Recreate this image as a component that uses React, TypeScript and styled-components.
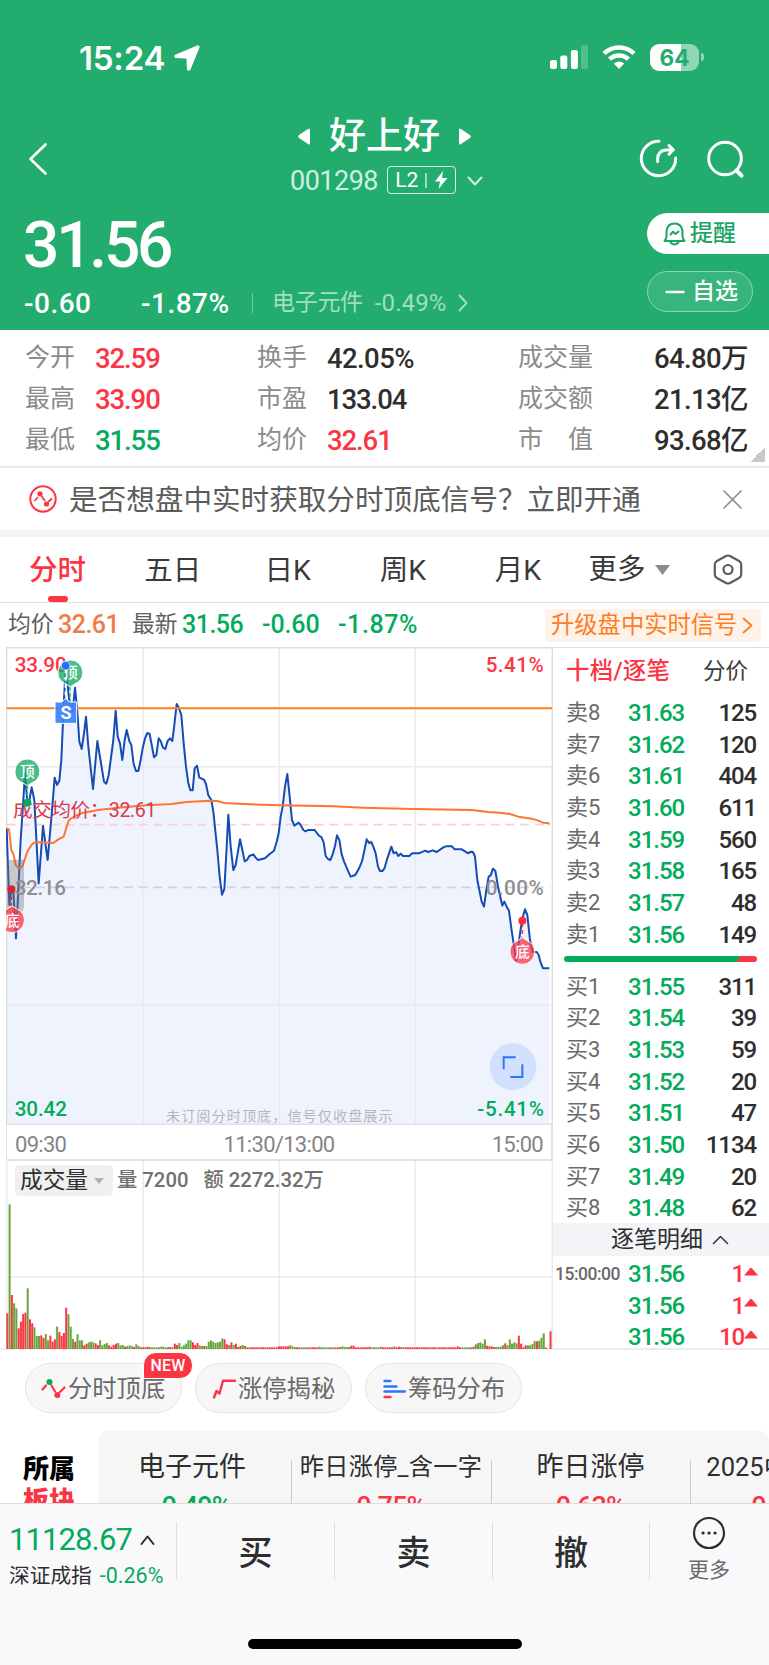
import React from 'react';
import styled, { createGlobalStyle } from 'styled-components';

const RED = '#fb3644';
const GREEN = '#04ab5c';
const HEADER = '#22ac6e';

const Global = createGlobalStyle`
  * { box-sizing: border-box; }
  body {
    margin: 0;
    background: #fff;
    font-family: Roboto, "Noto Sans CJK SC", sans-serif;
    color: #2e2e2e;
    overflow: hidden;
  }
  svg { display: block; flex: none; }
`;

const Page = styled.div`
  width: 769px;
  height: 1665px;
  display: flex;
  flex-direction: column;
  overflow: hidden;
  white-space: nowrap;
`;

const Content = styled.main`
  height: 1503px;
  flex: none;
  overflow: hidden;
`;

/* ---------- header ---------- */
const Header = styled.header`
  height: 330px;
  background: ${HEADER};
  color: #fff;
`;

const StatusBar = styled.div`
  height: 115px;
  padding: 0 65px 0 79px;
  display: flex;
  align-items: center;
`;

const Clock = styled.span`
  font: 600 33px/40px Inter, sans-serif;
  letter-spacing: -0.2px;
  margin-right: 9px;
  padding-top: 1px;
`;

const StatusIcons = styled.div`
  margin-left: auto;
  display: flex;
  align-items: center;
  gap: 14px;
  padding-bottom: 1px;
`;

const Battery = styled.div`
  display: flex;
  align-items: center;
  gap: 2px;
`;

const BatteryBody = styled.div`
  width: 49px;
  height: 27px;
  border-radius: 9px;
  background: linear-gradient(to right, #fff 64%, #91d6b7 64%);
  color: ${HEADER};
  font: 700 22.5px/27px Inter, sans-serif;
  text-align: center;
`;

const BatteryTip = styled.i`
  width: 3px;
  height: 8px;
  border-radius: 0 4px 4px 0;
  background: #91d6b7;
`;

const Nav = styled.nav`
  height: 90px;
  display: grid;
  grid-template-columns: 200px 1fr 200px;
`;

const NavBack = styled.div`
  padding: 28px 0 0 28px;
`;

const NavActions = styled.div`
  display: flex;
  justify-content: flex-end;
  gap: 29px;
  padding: 24px 25px 0 0;
`;

const NavTitle = styled.div`
  display: flex;
  flex-direction: column;
  align-items: center;
`;

const StockName = styled.h1`
  margin: 1px 0 0;
  height: 40px;
  display: flex;
  align-items: center;
  gap: 19px;
  font-size: 37px;
  line-height: 41px;
  font-weight: 500;
`;

const StockCode = styled.div`
  height: 34px;
  margin-top: 8px;
  padding-left: 4px;
  display: flex;
  align-items: center;
  font-size: 27px;
  line-height: 34px;
  letter-spacing: -0.5px;
  color: #d0efe1;
`;

const LevelBadge = styled.span`
  width: 69px;
  height: 28px;
  margin: 0 11px 2px 9px;
  border: 1.5px solid #d9f2e7;
  border-radius: 4px;
  display: flex;
  align-items: center;
  justify-content: center;
  gap: 7px;
  font-size: 21px;
  letter-spacing: 0;
  color: #fff;
`;

const BadgeRule = styled.i`
  width: 1.5px;
  height: 15px;
  background: #9edcc0;
`;

const Quote = styled.div`
  height: 125px;
  display: flex;
  justify-content: space-between;
`;

const QuoteFigures = styled.div`
  padding-left: 23px;
`;

const Price = styled.div`
  margin-top: 3px;
  height: 74px;
  font-size: 64px;
  line-height: 75px;
  font-weight: 500;
  letter-spacing: -3.2px;
`;

const ChangeRow = styled.div`
  height: 42px;
  padding-left: 1px;
  display: flex;
  align-items: center;
  font-size: 28px;
  font-weight: 500;
  letter-spacing: 0.5px;
`;

const Change = styled.span<{ $w: number }>`
  width: ${p => p.$w}px;
`;

const Sector = styled.span`
  margin-left: 12px;
  padding-left: 19px;
  line-height: 20px;
  border-left: 1.5px solid #6dc9a0;
  display: flex;
  align-items: center;
  gap: 12px;
  font-size: 23px;
  font-weight: 400;
  letter-spacing: -0.3px;
  color: #a3debf;
`;

const SectorChange = styled.span`
  font-size: 24px;
  letter-spacing: 0.1px;
`;

const QuoteButtons = styled.div`
  width: 122px;
  padding-top: 8px;
  display: flex;
  flex-direction: column;
  gap: 17px;
`;

const AlertButton = styled.button`
  height: 41px;
  border: 0;
  border-radius: 21px 0 0 21px;
  background: #fff;
  color: #1da567;
  font: 500 23px/41px Roboto, "Noto Sans CJK SC", sans-serif;
  display: flex;
  align-items: center;
  gap: 4px;
  padding: 0 0 0 16px;
`;

const WatchButton = styled.button`
  width: 106px;
  height: 41px;
  border: 1px solid #90d5b6;
  border-radius: 21px;
  background: #38b57d;
  color: #fff;
  font: 500 23px/40px Roboto, "Noto Sans CJK SC", sans-serif;
  display: flex;
  align-items: center;
  gap: 7px;
  padding: 1px 0 0 17px;
`;

/* ---------- stats ---------- */
const Stats = styled.section`
  height: 138px;
  padding: 8px 21px 0 25px;
  display: grid;
  grid-template-columns: 232px 261px 1fr;
  grid-auto-rows: 41px;
  border-bottom: 2px solid #ebebed;
  background: linear-gradient(135deg, transparent 50%, #c8c8c8 50%) no-repeat 750px 117px / 15px 15px;
`;

const Stat = styled.div<{ $spread?: boolean }>`
  display: flex;
  align-items: center;
  justify-content: ${p => (p.$spread ? 'space-between' : 'flex-start')};
  font-size: 25px;
  line-height: 41px;
`;

const StatLabel = styled.span`
  min-width: 70px;
  color: #8b8b8b;
  padding-bottom: 2px;
  line-height: 39px;
`;

const StatValue = styled.span<{ $c?: string; $wide?: boolean }>`
  font-size: 27.5px;
  font-weight: 500;
  letter-spacing: ${p => (p.$wide ? '-0.6px' : '-1.1px')};
  color: ${p => p.$c || '#2e2e2e'};
`;

/* ---------- notice ---------- */
const Notice = styled.section`
  height: 69px;
  border-bottom: 7px solid #f2f4f8;
  padding: 0 27px 0 29px;
  display: flex;
  align-items: center;
`;

const NoticeText = styled.span`
  margin-left: 12px;
  padding-top: 2px;
  font-size: 28.6px;
  line-height: 60px;
  color: #5c5c5c;
`;

const CloseSlot = styled.span`
  margin-left: auto;
`;

/* ---------- tabs ---------- */
const Tabs = styled.div`
  height: 66px;
  display: flex;
  border-bottom: 1.5px solid #dedede;
  font-size: 28.5px;
  line-height: 68px;
  color: #3a3a3a;
`;

const Tab = styled.div<{ $on?: boolean }>`
  flex: 0 0 115.1px;
  display: flex;
  flex-direction: column;
  align-items: center;
  height: 65px;
  font-weight: ${p => (p.$on ? 500 : 400)};
  color: ${p => (p.$on ? RED : '#3a3a3a')};
  &::after {
    content: '';
    flex: none;
    width: 20px;
    height: 6px;
    margin-top: -9px;
    border-radius: 3px;
    background: ${p => (p.$on ? RED : 'transparent')};
  }
`;

const MoreTab = styled.div`
  margin-left: 13px;
  display: flex;
  align-items: center;
  gap: 10px;
`;

const GearSlot = styled.div`
  margin: 17px 0 0 43px;
`;

/* ---------- summary row ---------- */
const Summary = styled.div`
  height: 44px;
  padding: 0 8px 0 8px;
  display: flex;
  align-items: center;
  line-height: 46px;
`;

const SummaryLabel = styled.span`
  width: 50px;
  font-size: 22.8px;
  color: #606060;
`;

const SummaryValue = styled.span<{ $w: number; $c: string; $gap?: number }>`
  width: ${p => p.$w}px;
  font-size: 25px;
  font-weight: 500;
  letter-spacing: ${p => p.$gap ?? -0.5}px;
  color: ${p => p.$c};
`;

const Upgrade = styled.span`
  margin-left: auto;
  width: 216px;
  height: 33px;
  border-radius: 4px;
  background: #fff2e9;
  color: #ff7c24;
  font-size: 23.3px;
  line-height: 35px;
  display: flex;
  align-items: center;
  gap: 5px;
  padding-left: 6px;
`;

/* ---------- market area ---------- */
const Market = styled.section`
  height: 703px;
  display: grid;
  grid-template-columns: 547px 1fr;
  padding-left: 6px;
  border-bottom: 2px solid #ececee;
`;

const ChartColumn = styled.div`
  display: flex;
  flex-direction: column;
`;

const TimeAxis = styled.div`
  height: 36px;
  display: flex;
  justify-content: space-between;
  padding: 0 8px;
  border: solid #e2e2e4;
  border-width: 0 2px 2px 1.5px;
  font-size: 22px;
  line-height: 39px;
  letter-spacing: -0.7px;
  color: #858585;
`;

const VolumePane = styled.div`
  height: 188px;
  display: grid;
  & > * { grid-area: 1 / 1; }
`;

const VolumeHead = styled.div`
  height: 40px;
  padding: 4px 0 0 9px;
  display: flex;
  align-items: flex-start;
  z-index: 1;
  font-size: 20.3px;
  line-height: 31px;
  font-weight: 500;
  color: #707070;
`;

const VolumePicker = styled.span`
  width: 98px;
  height: 31px;
  border-radius: 4px;
  background: #f0f0f0;
  color: #2e2e2e;
  font-size: 22.7px;
  font-weight: 400;
  display: flex;
  align-items: center;
  gap: 6px;
  padding-left: 5px;
  margin-right: 4px;
`;

const VolumeFigure = styled.span`
  margin-right: 15px;
`;

const Book = styled.aside`
  border-top: 1.5px solid #dedee0;
  display: flex;
  flex-direction: column;
`;

const BookTabs = styled.div`
  height: 48px;
  padding: 0 21px 0 13px;
  display: flex;
  justify-content: space-between;
  font-size: 22.5px;
  line-height: 47px;
  color: #3c3c3c;
`;

const BookTabOn = styled.b`
  font-size: 23.4px;
  letter-spacing: 0.3px;
  font-weight: 500;
  color: ${RED};
`;

const Levels = styled.div`
  padding: 0 14px 0 13px;
`;

const Level = styled.div`
  height: 31.7px;
  display: grid;
  grid-template-columns: 62px 60px 1fr;
  line-height: 34px;
`;

const LevelName = styled.span`
  font-size: 22px;
  color: #6a6a6a;
`;

const LevelPrice = styled.span`
  font-size: 24px;
  font-weight: 500;
  letter-spacing: -1px;
  color: ${GREEN};
`;

const LevelSize = styled.span`
  font-size: 24px;
  font-weight: 500;
  letter-spacing: -1.1px;
  margin-right: -1px;
  text-align: right;
`;

const Balance = styled.div`
  height: 6px;
  margin: 6px 12px 8px 11px;
  border-radius: 3px;
  background: linear-gradient(125deg, ${GREEN} 89.5%, ${RED} 89.5%);
`;

const TickHead = styled.div`
  height: 33px;
  padding-left: 18px;
  background: #f2f4f8;
  display: flex;
  align-items: center;
  justify-content: center;
  gap: 9px;
  font-size: 23px;
  line-height: 34px;
`;

const Tick = styled.div`
  height: 31.7px;
  margin-right: 11px;
  display: grid;
  grid-template-columns: 75px 60px 1fr 15px;
  align-items: center;
  line-height: 36px;
`;

const TickTime = styled.span`
  padding-left: 2px;
  font-size: 17.5px;
  font-weight: 500;
  letter-spacing: -0.5px;
  color: #6a6a6a;
`;

const TickSize = styled(LevelSize)`
  color: ${RED};
`;

/* ---------- chips ---------- */
const Chips = styled.div`
  height: 81px;
  padding: 13px 0 0 25px;
  display: flex;
  gap: 13px;
`;

const Chip = styled.div`
  position: relative;
  width: 157px;
  height: 50px;
  border: 1px solid #e4e4e4;
  border-radius: 25px;
  background: #f7f7f7;
  display: flex;
  align-items: center;
  gap: 2px;
  padding-left: 15px;
  font-size: 24.3px;
  line-height: 50px;
  padding-top: 2px;
  color: #6a6a6a;
`;

const NewBadge = styled.span`
  position: absolute;
  left: 117px;
  top: -12px;
  width: 50px;
  height: 27px;
  border: 1px solid #fff;
  border-radius: 13px 13px 13px 2px;
  background: ${RED};
  color: #fff;
  font: 500 16px/26px Roboto, sans-serif;
  text-align: center;
  letter-spacing: 0.2px;
`;

/* ---------- sector strip ---------- */
const SectorStrip = styled.section`
  height: 72px;
  display: flex;
`;

const StripTitle = styled.div`
  width: 98px;
  padding: 22px 0 0 23px;
  font-size: 26px;
  line-height: 32px;
  font-weight: 800;
  color: #000;
`;

const StripTitleRed = styled.div`
  color: ${RED};
`;

const StripCards = styled.div`
  width: 671px;
  border-radius: 10px 10px 0 0;
  background: #f6f6f6;
  display: flex;
  overflow: hidden;
`;

const StripCard = styled.div<{ $w: number; $size: number; $end?: number; $gap?: number }>`
  flex: 0 0 ${p => p.$w}px;
  padding: 19px ${p => p.$end ?? 0}px 0 0;
  text-align: center;
  font-size: ${p => p.$size}px;
  letter-spacing: ${p => p.$gap ?? 0}px;
  line-height: 34px;
  background: linear-gradient(#ccc, #ccc) no-repeat right 29px / 1.5px 100%;
`;

const StripValue = styled.div<{ $c: string }>`
  padding-top: 5px;
  font-size: 27px;
  line-height: 36px;
  letter-spacing: -0.8px;
  font-weight: 500;
  color: ${p => p.$c};
`;

/* ---------- bottom bar ---------- */
const BottomBar = styled.footer`
  height: 162px;
  flex: none;
  border-top: 1.5px solid #dcdce0;
  background: #f9f9fc;
  display: flex;
  flex-direction: column;
  align-items: center;
`;

const Actions = styled.div`
  width: 769px;
  height: 135px;
  padding-top: 18px;
  display: grid;
  grid-template-columns: 177px 158px 158px 157px 1fr;
  grid-template-rows: 58px;
`;

const IndexCell = styled.div`
  padding-left: 9px;
  border-right: 1px solid #dedee2;
`;

const IndexValue = styled.div`
  height: 32px;
  margin-top: 2px;
  display: flex;
  align-items: center;
  gap: 8px;
  font-size: 31px;
  line-height: 32px;
  letter-spacing: -0.9px;
  color: ${GREEN};
`;

const IndexName = styled.div`
  margin-top: 6px;
  font-size: 20.7px;
  line-height: 28px;
`;

const IndexChange = styled.span`
  margin-left: 8px;
  font-size: 21.5px;
  color: ${GREEN};
`;

const Action = styled.div`
  border-right: 1px solid #dedee2;
  font-size: 34px;
  line-height: 62px;
  font-weight: 500;
  text-align: center;
`;

const MoreCell = styled.div`
  display: flex;
  flex-direction: column;
  align-items: center;
  margin: -6px 1px 0 0;
  font-size: 21px;
  line-height: 40px;
  color: #6a6a6a;
`;

const HomeIndicator = styled.div`
  width: 274px;
  height: 10px;
  border-radius: 5px;
  background: #000;
`;

/* ---------- data ---------- */
const stats: [string, string, string?][] = [
  ['今开', '32.59', RED], ['换手', '42.05%'], ['成交量', '64.80万'],
  ['最高', '33.90', RED], ['市盈', '133.04'], ['成交额', '21.13亿'],
  ['最低', '31.55', GREEN], ['均价', '32.61', RED], ['市　值', '93.68亿'],
];

const asks = [['卖8', '31.63', '125'], ['卖7', '31.62', '120'], ['卖6', '31.61', '404'], ['卖5', '31.60', '611'],
  ['卖4', '31.59', '560'], ['卖3', '31.58', '165'], ['卖2', '31.57', '48'], ['卖1', '31.56', '149']];
const bids = [['买1', '31.55', '311'], ['买2', '31.54', '39'], ['买3', '31.53', '59'], ['买4', '31.52', '20'],
  ['买5', '31.51', '47'], ['买6', '31.50', '1134'], ['买7', '31.49', '20'], ['买8', '31.48', '62']];
const ticks = [['15:00:00', '31.56', '1'], ['', '31.56', '1'], ['', '31.56', '10']];

const pricePath = '20,565 28,795 34,750 40,750 48,895 62,600 70,480 75,400 82,485 87,487 95,442 103,480 116,730 129,558 143,660 157,500 164,413 171,435 178,422 184,360 191,200 197,80 206,165 212,205 218,215 225,143 232,215 238,305 245,327 252,280 258,230 265,320 279,447 292,303 299,345 312,425 319,431 326,405 340,300 347,212 353,290 360,310 367,360 374,300 380,270 388,303 394,315 401,372 408,393 415,393 422,360 428,325 435,295 442,279 449,282 456,320 462,352 469,345 476,295 482,303 489,323 496,327 503,303 510,295 517,303 523,255 530,192 537,205 544,225 551,310 558,380 565,430 571,451 578,451 584,385 591,377 598,413 612,419 618,432 625,466 634,480 640,515 652,630 659,710 666,764 673,747 679,640 685,524 692,620 700,690 707,675 713,640 720,598 727,630 734,664 741,660 748,648 760,643 767,653 774,660 795,655 808,643 822,632 830,605 836,580 842,530 848,500 855,440 862,402 868,460 876,540 883,557 896,548 903,557 910,570 917,574 924,570 944,570 956,586 964,591 971,607 977,648 984,657 991,660 998,643 1005,618 1011,586 1018,600 1025,643 1032,664 1045,695 1052,710 1066,705 1078,683 1086,664 1093,632 1100,598 1107,609 1114,606 1120,620 1127,640 1134,680 1140,693 1147,693 1153,686 1162,655 1174,620 1181,640 1188,636 1195,648 1202,641 1209,648 1228,648 1236,640 1256,640 1276,632 1284,636 1298,631 1310,636 1330,622 1338,619 1356,619 1364,628 1385,628 1405,640 1412,635 1419,636 1425,650 1432,720 1445,785 1452,800 1459,750 1466,710 1472,706 1479,686 1486,693 1494,740 1507,797 1513,785 1520,800 1527,812 1534,865 1540,905 1548,963 1558,895 1566,840 1575,808 1582,825 1590,900 1598,935 1610,936 1616,945 1622,968 1629,985 1648,985';
const averagePath = '20,565 27,568 34,630 41,645 47,675 54,683 61,685 68,677 82,635 95,614 103,608 116,607 160,609 175,598 191,590 200,560 207,540 225,528 250,518 300,509 370,502 440,496 515,492 560,486 630,482 652,483 673,489 750,493 840,496 920,497 1000,499 1090,503 1240,507 1415,510 1465,516 1500,518 1530,522 1555,530 1595,536 1615,542 1629,548 1642,549 1649,552';

const openingBars = 'r108 g435 r163 g138 g123 r63 r83 r106 r110 g183 r90 r78 g66 g40 g40 r42 r34 g46 g27 r41 r23 r30 g68 r52 r40 r49 r125 g105 g68 g31 r23 g45 g27 g27 r12 r17 g21 g23 g21 r18 r13 g27 g12 g16 g19 r12 r8 r13 r17 g19 g12 g13 r8 g10 g12 g10 r7 g15 g10 r6 r6 r6 r8 g7 g6 g6 g6 g6 g8 g8 g6 r6 r7 g6 r17 r13 g19 g8 g12 g17 g27 g27 r21 r13 r19 g12 g10 r10 g10 g23 g27 g23 g19 g21 g23 g33 r30 r15 g13 r21 g13 r17 r7 r10 g13 g10'.split(' ');
const closingBars = 'g15 g19 g21 g17 g30 r11 r9 r9 r7 g7 g7 g8 g12 r18 g12 g30 g17 g21 g18 r41 r17 r6 r12 g12 g12 g16 g25 r24 g26 g35 g48 r5 r0 r54'.split(' ');
const middayBumps: Record<number, string> = { 120: 'r9', 121: 'r9', 122: 'r9', 123: 'r9', 124: 'r9', 125: 'g12', 126: 'g9', 127: 'g7', 138: 'g8', 147: 'g7', 148: 'g9', 149: 'g7', 150: 'g7', 151: 'g7', 152: 'r11', 153: 'r11', 160: 'r8', 165: 'g8', 171: 'g9', 172: 'r6', 173: 'r8', 174: 'g7', 199: 'r9', 205: 'r6', 206: 'r8' };
const volumeBars = Array.from({ length: 241 }, (_, i) => {
  if (i < openingBars.length) return openingBars[i];
  if (i >= 207) return closingBars[i - 207];
  if (middayBumps[i]) return middayBumps[i];
  const green = (i > 129 && i < 133) || (i > 138 && i < 145) || (i > 160 && i < 165) || i === 190 || (i > 200 && i < 205);
  return (green ? 'g' : 'r') + '6';
});

/* ---------- drawings ---------- */
const Pin = ({ x, y, up, label, color, r = 37 }: { x: number; y: number; up?: boolean; label: string; color: string; r?: number }) => (
  <g>
    <path
      d="M-37 0A37 37 0 0 1 37 0C37 16 30 27 16 33L0 43L-16 33C-30 27 -37 16 -37 0Z"
      transform={`translate(${x} ${y}) scale(${r / 37} ${up ? -1 : 1})`}
      fill={color} fillOpacity={0.76} stroke="#fff" strokeOpacity={0.9} strokeWidth={3}
    />
    <text x={x} y={y + 16} textAnchor="middle" fontSize={44} fontWeight={500} fill="#fff">{label}</text>
  </g>
);

const PriceChart = () => (
  <svg width="547" height="478" viewBox="18 21 1641 1434">
    <rect x="20" y="22" width="1637" height="1432" fill="#fff" />
    <polygon points={`20,1454 ${pricePath} 1648,1454`} fill="#eff3fe" />
    <g stroke="#e9eaec" strokeWidth="4.500" fill="none">
      <path d="M430 21V1454M838 21V1454M1246 21V1454M20 380H1657M20 1096H1657" />
      <path d="M20 1454V23H1657V1454" stroke="#dedee0" />
      <path d="M18 1453H1658" stroke="#e0e1e4" />
    </g>
    <path d="M20 554H1650" stroke="#fad0d6" strokeWidth="5" strokeDasharray="27 17" />
    <path d="M20 742H1650" stroke="#c9d5df" strokeWidth="5" strokeDasharray="27 17" />
    <g fontSize="62" fontWeight="500">
      <text x="44" y="97" textLength="156" fill={RED}>33.90</text>
      <text x="1457" y="97" textLength="174" fill={RED}>5.41%</text>
      <text x="44" y="1427" textLength="157" fill={GREEN}>30.42</text>
      <text x="1432" y="1427" textLength="200" fill={GREEN}>-5.41%</text>
    </g>
    <text x="498" y="1443" textLength="680" fontSize="42.4" fill="#b5b7bc">未订阅分时顶底，信号仅收盘展示</text>
    <circle cx="1539" cy="1280" r="70" fill="#d1e0fd" />
    <path d="M1511 1288V1252H1547M1531 1311H1567V1273" fill="none" stroke="#2b76fa" strokeWidth="6" />
    <polyline points={pricePath} fill="none" stroke="#154cb4" strokeWidth="6" strokeLinejoin="round" />
    <path d="M20 205H1656" stroke="#ff7e1c" strokeWidth="6" />
    <polyline points={averagePath} fill="none" stroke="#ff7434" strokeWidth="6" strokeLinejoin="round" />
    <text x="39" y="531" textLength="430" fontSize="59" fill="#d93b4c">成交均价：32.61</text>
    <path d="M20 659H72V795Q72 815 60 818H20Z" fill="#777" fillOpacity="0.4" />
    <g fontSize="62" fontWeight="500" fill="#8f8f8f">
      <text x="44" y="764" textLength="154">32.16</text>
      <text x="1457" y="764" textLength="174">0.00%</text>
    </g>
    <path d="M82 435V480" stroke="#33b679" strokeWidth="5" strokeDasharray="12 8" />
    <circle cx="82" cy="488" r="12" fill={GREEN} />
    <Pin x={82} y={394} label="顶" color="#0fa862" />
    <path d="M210 140V185" stroke="#33b679" strokeWidth="5" strokeDasharray="12 8" />
    <Pin x={211} y={97} label="顶" color="#0fa862" />
    <path d="M197 88V180" stroke="#fff" strokeWidth="6" strokeDasharray="12 10" />
    <path d="M165 186H186L197 175L208 186H230V250H165Z" fill="#3b82fb" fillOpacity="0.92" stroke="#fff" strokeWidth="3" />
    <text x="198" y="237" textAnchor="middle" fontSize="54" fontWeight="700" fill="#fff">S</text>
    <circle cx="197" cy="77" r="13" fill="#1f6ffc" stroke="#fff" strokeWidth="2" />
    <path d="M34 752V800" stroke="#c92f3c" strokeWidth="5" strokeDasharray="10 8" />
    <circle cx="34" cy="748" r="12" fill="#d62535" />
    <Pin x={36} y={841} up label="底" color="#fb3848" />
    <path d="M1567 850V893" stroke="#fb3848" strokeWidth="5" strokeDasharray="12 8" />
    <circle cx="1567" cy="842" r="12" fill="#fb3040" />
    <Pin x={1567} y={936} up label="底" color="#fb3848" />
  </svg>
);

const VolumeChart = () => (
  <svg width="547" height="188" viewBox="18 3 1641 564">
    <path d="M20 3V567M1657 3V567M430 3V567M838 3V567M1246 3V567M20 351H1657M20 566H1657" stroke="#e9eaec" strokeWidth="4.500" />
    {volumeBars.map((bar, i) => {
      const h = Number(bar.slice(1));
      return <rect key={i} x={19 + i * 6.79} y={568 - h} width={6} height={h} fill={bar[0] === 'r' ? RED : '#66a63c'} />;
    })}
  </svg>
);

const Line = ({ w, h, d, c, s = 2 }: { w: number; h: number; d: string; c: string; s?: number }) => (
  <svg width={w} height={h} viewBox={`0 0 ${w} ${h}`} fill="none" stroke={c} strokeWidth={s} strokeLinecap="round" strokeLinejoin="round">
    <path d={d} />
  </svg>
);

const Fill = ({ w, h, d, c }: { w: number; h: number; d: string; c: string }) => (
  <svg width={w} height={h} viewBox={`0 0 ${w} ${h}`} fill={c}><path d={d} /></svg>
);

const BookRows = ({ rows }: { rows: string[][] }) => (
  <Levels>
    {rows.map(([name, price, size]) => (
      <Level key={name}>
        <LevelName>{name}</LevelName>
        <LevelPrice>{price}</LevelPrice>
        <LevelSize>{size}</LevelSize>
      </Level>
    ))}
  </Levels>
);

export default function App() {
  return (
    <Page>
      <Global />
      <Content>
        <Header>
          <StatusBar>
            <Clock>15:24</Clock>
            <Fill w={26} h={26} c="#fff" d="M23.200 .6C24.800 0 26 1.200 25.400 2.800L16.500 24.600C15.700 26.200 13.200 26 12.900 24.200L12.500 14.500C12.500 13.900 12.200 13.600 11.600 13.600L1.800 13C0 12.800-.3 10.500 1.300 9.700Z" />
            <StatusIcons>
              <svg width="38" height="26" viewBox="0 0 38 26" fill="#fff">
                <rect x="0" y="16" width="7" height="9" rx="2" />
                <rect x="10.300" y="11.500" width="7" height="13.500" rx="2" />
                <rect x="20.900" y="6" width="7" height="19" rx="2" />
                <rect x="31" y="1" width="7" height="24" rx="2" opacity=".22" />
              </svg>
              <svg width="34" height="26" viewBox="0 0 34 26" fill="none" stroke="#fff" strokeWidth="4.500">
                <path d="M2 9.500A21.500 21.500 0 0 1 32 9.500" />
                <path d="M7.600 15.200A13.500 13.500 0 0 1 26.400 15.200" />
                <path d="M17 25L11.800 19.600Q17 15.500 22.200 19.600Z" fill="#fff" stroke="none" />
              </svg>
              <Battery><BatteryBody>64</BatteryBody><BatteryTip /></Battery>
            </StatusIcons>
          </StatusBar>
          <Nav>
            <NavBack><Line w={20} h={32} c="#fff" s={2.6} d="M17.500 1.500L2.500 16L17.500 30.500" /></NavBack>
            <NavTitle>
              <StockName>
                <Fill w={12} h={17} c="#fff" d="M12 2V15Q12 17.500 10 16L1 10Q-.6 8.500 1 7L10 1Q12-.5 12 2Z" />
                好上好
                <Fill w={12} h={17} c="#fff" d="M0 2V15Q0 17.500 2 16L11 10Q12.600 8.500 11 7L2 1Q0-.5 0 2Z" />
              </StockName>
              <StockCode>
                001298
                <LevelBadge>
                  L2<BadgeRule />
                  <Fill w={14} h={18} c="#fff" d="M9 0L1 10.500H6L4.500 18L13.500 7H8Z" />
                </LevelBadge>
                <Line w={16} h={10} c="#d0efe1" d="M1.500 1.500L8 8.500L14.500 1.500" />
              </StockCode>
            </NavTitle>
            <NavActions>
              <svg width="39" height="40" viewBox="0 0 39 40" fill="none" stroke="#fff" strokeWidth="3" strokeLinecap="round" strokeLinejoin="round">
                <path d="M20 2.300A17.200 17.200 0 1 0 36.700 19" />
                <path d="M18.600 22.500V20Q19 11.500 27 11H33M30 6.500L34.300 10.800L30 15.200" />
              </svg>
              <svg width="37" height="40" viewBox="0 0 37 40" fill="none" stroke="#fff" strokeWidth="3" strokeLinecap="round">
                <circle cx="18" cy="19.500" r="16.300" /><path d="M29.500 31.500L34.500 36.700" strokeWidth="4" />
              </svg>
            </NavActions>
          </Nav>
          <Quote>
            <QuoteFigures>
              <Price>31.56</Price>
              <ChangeRow>
                <Change $w={117}>-0.60</Change>
                <Change $w={99}>-1.87%</Change>
                <Sector>
                  电子元件<SectorChange>-0.49%</SectorChange>
                  <Line w={10} h={18} c="#a3debf" d="M1.500 1.500L8.500 9L1.500 16.500" />
                </Sector>
              </ChangeRow>
            </QuoteFigures>
            <QuoteButtons>
              <AlertButton>
                <svg width="23" height="24" viewBox="0 0 23 24" fill="none" stroke="#1da567" strokeWidth="2" strokeLinecap="round" strokeLinejoin="round">
                  <path d="M1.500 19H21.500Q19.500 17 19.500 14V9Q18.500 1.500 11.500 1.500T3.500 9V14Q3.500 17 1.500 19Z" />
                  <path d="M7.500 20.500Q11.500 24.500 15.500 20.500M7.500 12.500L10 9.800L12.500 12L15.500 9.500" />
                </svg>
                提醒
              </AlertButton>
              <WatchButton>
                <Line w={20} h={4} c="#fff" s={2.4} d="M1.500 2H18.500" />
                自选
              </WatchButton>
            </QuoteButtons>
          </Quote>
        </Header>

        <Stats>
          {stats.map(([label, value, color], i) => (
            <Stat key={label} $spread={i % 3 === 2}>
              <StatLabel>{label}</StatLabel>
              <StatValue $c={color} $wide={i % 3 === 2 || i === 1}>{value}</StatValue>
            </Stat>
          ))}
        </Stats>

        <Notice>
          <svg width="28" height="28" viewBox="0 0 28 28" fill="none" stroke={RED} strokeWidth="2">
            <circle cx="14" cy="14" r="12.700" />
            <path d="M5.500 16L9 12M12.500 11L16 16M19 17L23 13.500" strokeWidth="1.800" />
            <circle cx="11" cy="8.800" r="2.600" fill={RED} stroke="none" /><circle cx="17.500" cy="19" r="2.600" fill={RED} stroke="none" />
          </svg>
          <NoticeText>是否想盘中实时获取分时顶底信号？立即开通</NoticeText>
          <CloseSlot><Line w={19} h={19} c="#8a8a8a" s={1.6} d="M1 1L18 18M18 1L1 18" /></CloseSlot>
        </Notice>

        <Tabs>
          <Tab $on>分时</Tab>
          <Tab>五日</Tab>
          <Tab>日K</Tab>
          <Tab>周K</Tab>
          <Tab>月K</Tab>
          <MoreTab>更多<Fill w={15} h={10} c="#8b8b8b" d="M0 0H15L7.500 10Z" /></MoreTab>
          <GearSlot>
            <svg width="30" height="31" viewBox="0 0 30 31" fill="none" stroke="#5c5c5c" strokeWidth="2.200" strokeLinejoin="round">
              <path d="M13 2Q15 1 17 2L26.500 7.300Q28.200 8.500 28.200 10.500V20.500Q28.200 22.500 26.500 23.700L17 29Q15 30 13 29L3.500 23.700Q1.800 22.500 1.800 20.500V10.500Q1.800 8.500 3.500 7.300Z" />
              <circle cx="15" cy="15.500" r="4.500" />
            </svg>
          </GearSlot>
        </Tabs>

        <Summary>
          <SummaryLabel>均价</SummaryLabel>
          <SummaryValue $w={74} $c="#f27b43">32.61</SummaryValue>
          <SummaryLabel>最新</SummaryLabel>
          <SummaryValue $w={80} $c={GREEN}>31.56</SummaryValue>
          <SummaryValue $w={76} $c={GREEN} $gap={-0.1}>-0.60</SummaryValue>
          <SummaryValue $w={90} $c={GREEN} $gap={0.6}>-1.87%</SummaryValue>
          <Upgrade>
            升级盘中实时信号
            <Line w={11} h={17} c="#ff7c24" s={1.8} d="M1.500 1.500L9.500 8.500L1.500 15.500" />
          </Upgrade>
        </Summary>

        <Market>
          <ChartColumn>
            <PriceChart />
            <TimeAxis><span>09:30</span><span>11:30/13:00</span><span>15:00</span></TimeAxis>
            <VolumePane>
              <VolumeChart />
              <VolumeHead>
                <VolumePicker>成交量<Fill w={10} h={6} c="#b0b0b0" d="M0 0H10L5 6Z" /></VolumePicker>
                <VolumeFigure>量 7200</VolumeFigure>
                <VolumeFigure>额 2272.32万</VolumeFigure>
              </VolumeHead>
            </VolumePane>
          </ChartColumn>
          <Book>
            <BookTabs><BookTabOn>十档/逐笔</BookTabOn><span>分价</span></BookTabs>
            <BookRows rows={asks} />
            <Balance />
            <BookRows rows={bids} />
            <TickHead>逐笔明细<Line w={17} h={10} c="#3a3a3a" s={1.6} d="M1.500 8.500L8.500 1.500L15.500 8.500" /></TickHead>
            {ticks.map(([time, price, size], i) => (
              <Tick key={i}>
                <TickTime>{time}</TickTime>
                <LevelPrice>{price}</LevelPrice>
                <TickSize>{size}</TickSize>
                <Fill w={15} h={15} c={RED} d="M1 8.500H15Q14.500 7.500 8.800 1.200Q8 .5 7.200 1.200Z" />
              </Tick>
            ))}
          </Book>
        </Market>

        <Chips>
          <Chip>
            <svg width="25" height="22" viewBox="0 0 25 22" fill="none" stroke={RED} strokeWidth="2.200" strokeLinecap="round">
              <path d="M1.500 11.500L5 7.500M10.500 7.500L14 13.500M19 14L23.500 9.500" />
              <circle cx="8.500" cy="4" r="3" fill={GREEN} stroke="none" /><circle cx="16.300" cy="17" r="3" fill={RED} stroke="none" />
            </svg>
            分时顶底<NewBadge>NEW</NewBadge>
          </Chip>
          <Chip>
            <Line w={25} h={20} c={RED} s={2.4} d="M3 18.500L5.500 12L8.500 14.500L12 1.800H24" />
            涨停揭秘
          </Chip>
          <Chip>
            <svg width="25" height="20" viewBox="0 0 25 20" fill="none" stroke="#2b76fa" strokeWidth="2.400" strokeLinecap="round">
              <path d="M3.500 2H9.500M3.500 7.500H15.500M3.500 12.500H24" /><path d="M3.500 18H9.500" stroke={RED} />
            </svg>
            筹码分布
          </Chip>
        </Chips>

        <SectorStrip>
          <StripTitle>所属<StripTitleRed>板块</StripTitleRed></StripTitle>
          <StripCards>
            <StripCard $w={194} $size={27} $end={6}>电子元件<StripValue $c={GREEN}>-0.49%</StripValue></StripCard>
            <StripCard $w={200} $size={24.2} $end={2} $gap={0.3}>昨日涨停_含一字<StripValue $c={RED}>0.75%</StripValue></StripCard>
            <StripCard $w={199} $size={27} $end={2}>昨日涨停<StripValue $c={RED}>0.63%</StripValue></StripCard>
            <StripCard $w={200} $size={25.5} $end={10}>2025中报预增<StripValue $c={RED}>0.52%</StripValue></StripCard>
          </StripCards>
        </SectorStrip>
      </Content>

      <BottomBar>
        <Actions>
          <IndexCell>
            <IndexValue>11128.67<Line w={15} h={12} c="#2e2e2e" s={2} d="M1.500 10L7.500 2.500L13.500 10" /></IndexValue>
            <IndexName>深证成指<IndexChange>-0.26%</IndexChange></IndexName>
          </IndexCell>
          <Action>买</Action>
          <Action>卖</Action>
          <Action>撤</Action>
          <MoreCell>
            <svg width="34" height="34" viewBox="0 0 34 34" fill="none" stroke="#2e2e2e" strokeWidth="2.200">
              <circle cx="17" cy="17" r="15" />
              <path d="M11 17H11.100M17 17H17.100M23 17H23.100" strokeWidth="3.200" strokeLinecap="round" />
            </svg>
            更多
          </MoreCell>
        </Actions>
        <HomeIndicator />
      </BottomBar>
    </Page>
  );
}
